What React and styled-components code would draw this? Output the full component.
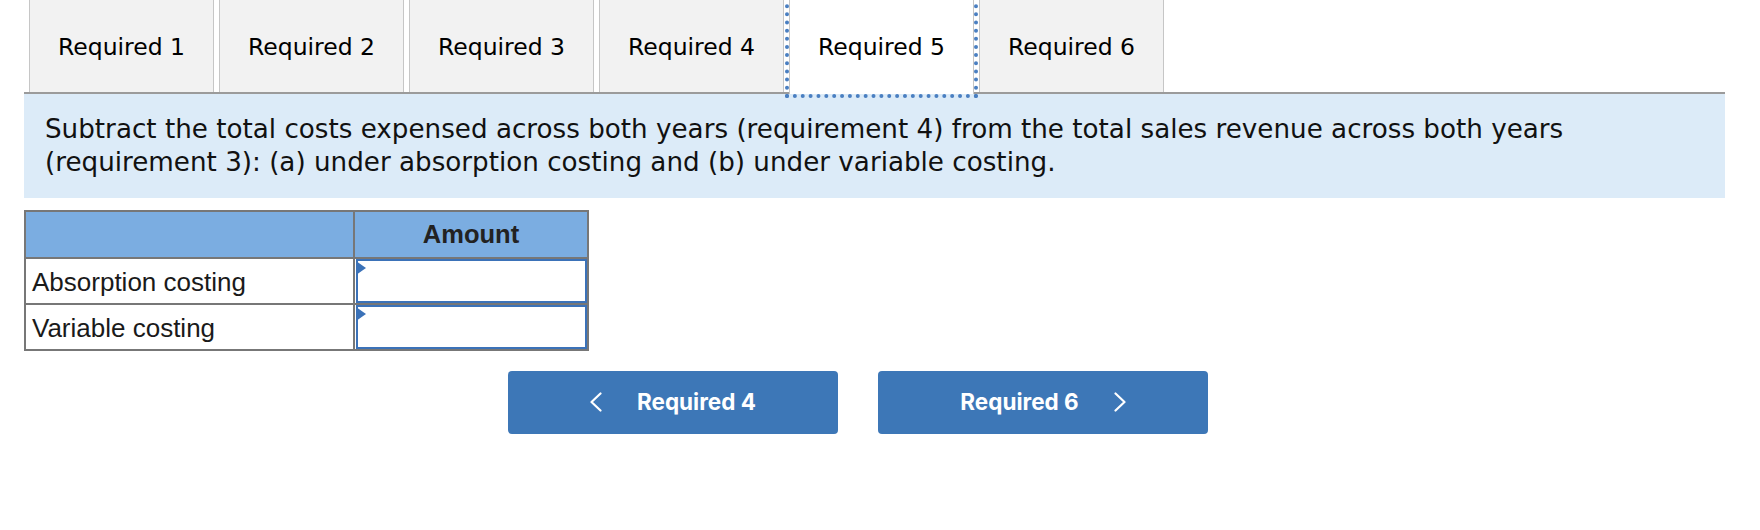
import React from "react";
import styled, { createGlobalStyle } from "styled-components";

const Global = createGlobalStyle`
  html, body { margin: 0; padding: 0; background: #ffffff; }
  body { width: 1760px; height: 530px; overflow: hidden; }
`;

const Page = styled.div`
  width: 1701px;
  padding-left: 24px;
`;

const TabList = styled.div`
  display: flex;
  align-items: flex-start;
  gap: 5px;
  height: 92px;
  padding-left: 5px;
  border-bottom: 2px solid #9b9b9b;
`;

const Tab = styled.div`
  box-sizing: border-box;
  width: 185px;
  height: ${(p) => (p.$active ? "94px" : "92px")};
  display: flex;
  align-items: center;
  justify-content: center;
  padding-top: 2px;
  padding-bottom: ${(p) => (p.$active ? "2px" : "0")};
  background: ${(p) => (p.$active ? "#ffffff" : "#f2f2f2")};
  border: 1px solid #c6c6c6;
  border-top: none;
  border-bottom: none;
  outline: ${(p) => (p.$active ? "4px dotted #4a7fc1" : "none")};
  position: relative;
  z-index: ${(p) => (p.$active ? 1 : 0)};
  font-family: "DejaVu Sans", Verdana, sans-serif;
  font-size: 23.5px;
  color: #000;
`;

const Instruction = styled.div`
  background: #dcebf8;
  padding: 19px 21px 19px;
  font-family: "DejaVu Sans", Verdana, sans-serif;
  font-size: 26.2px;
  line-height: 33px;
  color: #111;
`;

const Table = styled.table`
  margin-top: 12px;
  border-collapse: collapse;
  table-layout: fixed;
  width: 563px;
  border: 2px solid #777777;
  font-family: "Liberation Sans", Arial, sans-serif;
`;

const HeadCell = styled.th`
  height: 45px;
  padding: 0;
  background: #7badE1;
  border: 2px solid #777777;
  font-size: 25.5px;
  font-weight: 700;
  color: #222;
  text-align: center;
`;

const LabelCell = styled.td`
  height: 44px;
  padding: 3px 0 0 6px;
  border: 2px solid #777777;
  font-size: 26px;
  color: #1a1a1a;
  box-sizing: border-box;
  white-space: nowrap;
`;

const InputCell = styled.td`
  padding: 0;
  border: 2px solid #777777;
  vertical-align: top;
`;

const AmountBox = styled.div`
  position: relative;
  box-sizing: border-box;
  height: 44px;
  margin: 0 0 0 1px;
  border: 2px solid #3b72b8;
  background: #ffffff;
`;

const Flag = styled.span`
  position: absolute;
  left: -2px;
  top: 0px;
  width: 0;
  height: 0;
  border-top: 7px solid transparent;
  border-bottom: 7px solid transparent;
  border-left: 10px solid #3b72b8;
`;

const NavRow = styled.div`
  display: flex;
  gap: 40px;
  margin-top: 20px;
  padding-left: 484px;
`;

const NavButton = styled.button`
  box-sizing: border-box;
  width: 330px;
  height: 63px;
  display: flex;
  align-items: center;
  justify-content: center;
  gap: 35px;
  border: none;
  border-radius: 4px;
  background: #3d77b7;
  color: #ffffff;
  font-family: Inter, "Open Sans", sans-serif;
  font-weight: 700;
  font-size: 22.5px;
  padding: 0 0 2px;
  cursor: pointer;
`;

const Chevron = ({ dir }) => (
  <svg width="12" height="20" viewBox="0 0 12 20" fill="none">
    <polyline
      points={dir === "left" ? "10.5,1.5 1.5,10 10.5,18.5" : "1.5,1.5 10.5,10 1.5,18.5"}
      stroke="#ffffff"
      strokeWidth="2.2"
      strokeLinecap="round"
      strokeLinejoin="round"
    />
  </svg>
);

const tabs = ["Required 1", "Required 2", "Required 3", "Required 4", "Required 5", "Required 6"];

export default function App() {
  return (
    <>
      <Global />
      <Page>
        <TabList>
          {tabs.map((t, i) => (
            <Tab key={t} $active={i === 4}>
              {t}
            </Tab>
          ))}
        </TabList>
        <Instruction>
          Subtract the total costs expensed across both years (requirement 4) from the total sales revenue across both years
          (requirement 3): (a) under absorption costing and (b) under variable costing.
        </Instruction>
        <Table>
          <colgroup>
            <col style={{ width: "329px" }} />
            <col style={{ width: "234px" }} />
          </colgroup>
          <thead>
            <tr>
              <HeadCell />
              <HeadCell>Amount</HeadCell>
            </tr>
          </thead>
          <tbody>
            <tr>
              <LabelCell>Absorption costing</LabelCell>
              <InputCell>
                <AmountBox>
                  <Flag />
                </AmountBox>
              </InputCell>
            </tr>
            <tr>
              <LabelCell>Variable costing</LabelCell>
              <InputCell>
                <AmountBox>
                  <Flag />
                </AmountBox>
              </InputCell>
            </tr>
          </tbody>
        </Table>
        <NavRow>
          <NavButton>
            <Chevron dir="left" />
            <span>Required 4</span>
          </NavButton>
          <NavButton>
            <span>Required 6</span>
            <Chevron dir="right" />
          </NavButton>
        </NavRow>
      </Page>
    </>
  );
}
